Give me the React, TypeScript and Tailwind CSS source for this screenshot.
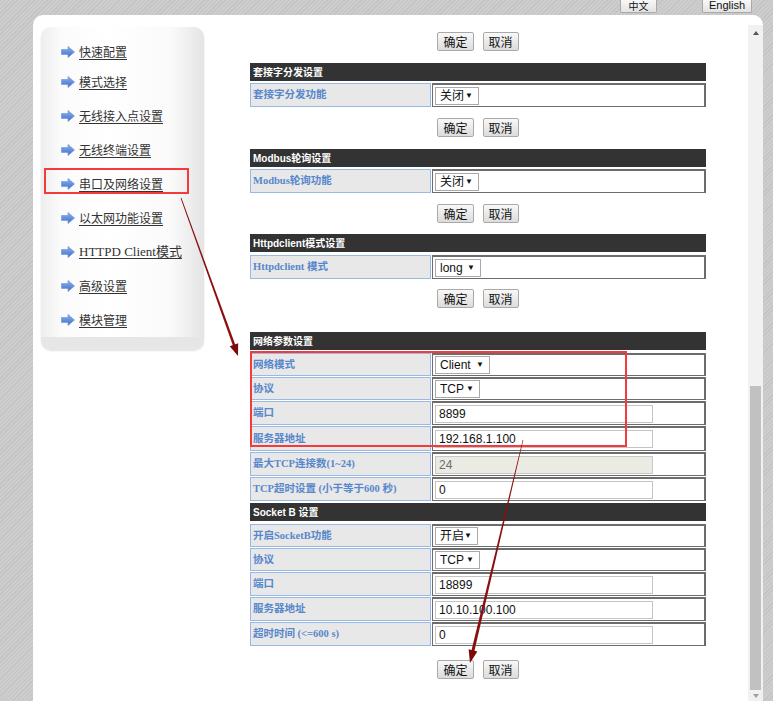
import React from "react";

const navItems = [
  { label: "快速配置", h: "h-[26px]" },
  { label: "模式选择", h: "h-[34px]" },
  { label: "无线接入点设置", h: "h-[34px]" },
  { label: "无线终端设置", h: "h-[34px]" },
  { label: "串口及网络设置", h: "h-[34px]" },
  { label: "以太网功能设置", h: "h-[34px]" },
  { label: "HTTPD Client模式", h: "h-[34px]", serif: true },
  { label: "高级设置", h: "h-[34px]" },
  { label: "模块管理", h: "h-[34px]" },
];

function BlueArrow() {
  return (
    <svg width="14" height="12" viewBox="0 0 14 12" className="shrink-0">
      <defs>
        <linearGradient id="ba" x1="0" y1="0" x2="0" y2="1">
          <stop offset="0" stopColor="#8fb4ee" />
          <stop offset="1" stopColor="#3d6cc8" />
        </linearGradient>
      </defs>
      <polygon
        points="0.5,3.5 7,3.5 7,0.5 13.5,6 7,11.5 7,8.5 0.5,8.5"
        fill="url(#ba)"
        stroke="#7a9fd8"
        strokeWidth="0.8"
      />
    </svg>
  );
}

function Btn({ children }: { children: React.ReactNode }) {
  return (
    <button className="flex h-[19px] items-center rounded-[2px] border border-[#a9a9a9] bg-[linear-gradient(#f8f8f8,#dcdcdc)] px-[5px] font-['Noto_Sans_CJK_SC',sans-serif] text-[12px] leading-none text-[#111]">
      {children}
    </button>
  );
}

function ButtonRow({ className }: { className: string }) {
  return (
    <div className={`flex justify-center gap-[9px] ${className}`}>
      <Btn>确定</Btn>
      <Btn>取消</Btn>
    </div>
  );
}

function Header({ title, className }: { title: string; className: string }) {
  return (
    <div
      className={`flex h-[18px] items-center bg-[#333] pl-[3px] font-['Liberation_Sans','Noto_Sans_CJK_SC',sans-serif] text-[10px] font-bold text-white ${className}`}
    >
      {title}
    </div>
  );
}

function Select({ value, w }: { value: string; w: string }) {
  return (
    <div
      className={`flex h-[18px] items-center justify-between border border-[#a9a9a9] bg-white pl-[4px] pr-[5px] font-['Liberation_Sans','Noto_Sans_CJK_SC',sans-serif] text-[12px] text-[#111] ${w}`}
    >
      <span>{value}</span>
      <span className="text-[8px]">▼</span>
    </div>
  );
}

function Input({ value, disabled }: { value: string; disabled?: boolean }) {
  return (
    <div
      className={
        disabled
          ? "flex h-[18px] w-[218px] items-center border border-[#c8c8c8] bg-[#ebebe4] pl-[3px] font-['Liberation_Sans',sans-serif] text-[12px] text-[#6d6d6d]"
          : "flex h-[18px] w-[218px] items-center border border-[#c4c4c4] bg-white pl-[3px] font-['Liberation_Sans',sans-serif] text-[12px] text-[#111]"
      }
    >
      {value}
    </div>
  );
}

function Row({
  label,
  h,
  children,
}: {
  label: string;
  h: string;
  children: React.ReactNode;
}) {
  return (
    <div className={`flex ${h}`}>
      <div className="flex w-[181px] items-center border border-[#97b9e4] bg-[#e8e8e8] pl-[2px] font-['Liberation_Serif','Noto_Sans_CJK_SC',serif] text-[10.5px] font-bold text-[#5787cc]">
        {label}
      </div>
      <div className="ml-[1px] flex flex-1 items-center border border-t-2 border-r-2 border-[#6c6c6c] pl-[2px]">
        {children}
      </div>
    </div>
  );
}

function taper(
  x1: number,
  y1: number,
  x2: number,
  y2: number,
  w1: number,
  w2: number,
  head: number,
  hw: number
) {
  const dx = x2 - x1;
  const dy = y2 - y1;
  const L = Math.hypot(dx, dy);
  const ux = dx / L;
  const uy = dy / L;
  const px = -uy;
  const py = ux;
  const bx = x2 - ux * (head - 1);
  const by = y2 - uy * (head - 1);
  const hx = x2 - ux * head;
  const hy = y2 - uy * head;
  const shaft = [
    [x1 + (px * w1) / 2, y1 + (py * w1) / 2],
    [bx + (px * w2) / 2, by + (py * w2) / 2],
    [bx - (px * w2) / 2, by - (py * w2) / 2],
    [x1 - (px * w1) / 2, y1 - (py * w1) / 2],
  ];
  const tip = [
    [x2, y2],
    [hx + px * hw, hy + py * hw],
    [hx - px * hw, hy - py * hw],
  ];
  const s = (a: number[][]) => a.map((p) => p.join(",")).join(" ");
  return { shaft: s(shaft), tip: s(tip) };
}

function Overlay() {
  const a1 = taper(181, 198, 238, 356, 0.8, 2.6, 12, 4.5);
  const a2 = taper(523, 440, 470, 663, 0.6, 3, 13, 4.5);
  return (
    <svg
      width="773"
      height="701"
      className="pointer-events-none absolute left-0 top-0"
    >
      <rect x="45" y="169" width="143" height="24" fill="none" stroke="#f43b3b" strokeWidth="2" />
      <rect x="251" y="352" width="375" height="94" fill="none" stroke="#f43b3b" strokeWidth="2" />
      <polygon points={a1.shaft} fill="#8a1010" />
      <polygon points={a1.tip} fill="#7a0a0a" />
      <polygon points={a2.shaft} fill="#8a1010" />
      <polygon points={a2.tip} fill="#7a0a0a" />
    </svg>
  );
}

export default function App() {
  return (
    <div className="relative h-[701px] w-[773px] overflow-hidden bg-[#cbcbcb] bg-[repeating-linear-gradient(135deg,#c3c3c3_0px,#c3c3c3_1px,#cdcdcd_1px,#cdcdcd_3px)]">
      <div className="flex h-[15px] items-start">
        <button className="ml-[620px] flex h-[13px] w-[37px] items-end justify-center rounded-b-[2px] border border-t-0 border-[#a9a9a9] bg-[linear-gradient(#f8f8f8,#e2e2e2)] font-['Noto_Sans_CJK_SC',sans-serif] text-[10px] leading-[13px] text-[#111]">
          中文
        </button>
        <button className="ml-[45px] flex h-[13px] w-[50px] items-end justify-center rounded-b-[2px] border border-t-0 border-[#a9a9a9] bg-[linear-gradient(#f8f8f8,#e2e2e2)] pb-[1px] font-['Liberation_Sans',sans-serif] text-[11px] leading-[11px] text-[#111]">
          English
        </button>
      </div>

      <div className="ml-[33px] flex h-[686px] w-[730px] overflow-hidden rounded-t-[10px] bg-white pl-[8px]">
        {/* sidebar */}
        <div className="mt-[12px] flex h-[323px] w-[163px] shrink-0 flex-col overflow-hidden rounded-[10px] bg-[linear-gradient(to_right,#ededed,#fbfbfb_12%,#ffffff_40%,#fafafa_80%,#e4e4e4)] shadow-[0_1px_2px_rgba(0,0,0,0.12)]">
          <div className="pt-[12px]">
            {navItems.map((it) => (
              <div key={it.label} className={`flex items-center pl-[20px] ${it.h}`}>
                <BlueArrow />
                <span
                  className={
                    it.serif
                      ? "ml-[4px] font-['Liberation_Serif','Noto_Sans_CJK_SC',serif] text-[13px] text-[#333] underline underline-offset-2"
                      : "ml-[4px] font-['Noto_Sans_CJK_SC',sans-serif] text-[12px] text-[#333] underline underline-offset-2"
                  }
                >
                  {it.label}
                </span>
              </div>
            ))}
          </div>
          <div className="mt-auto h-[14px] bg-[#e6e6e6]" />
        </div>

        {/* main */}
        <div className="ml-[46px] flex w-[456px] shrink-0 flex-col pt-[17px]">
          <ButtonRow className="" />

          <Header title="套接字分发设置" className="mt-[12px]" />
          <div className="mt-[2px]">
            <Row label="套接字分发功能" h="h-[24px]">
              <Select value="关闭" w="w-[44px]" />
            </Row>
          </div>
          <ButtonRow className="mt-[11px]" />

          <Header title="Modbus轮询设置" className="mt-[12px]" />
          <div className="mt-[2px]">
            <Row label="Modbus轮询功能" h="h-[24px]">
              <Select value="关闭" w="w-[44px]" />
            </Row>
          </div>
          <ButtonRow className="mt-[11px]" />

          <Header title="Httpdclient模式设置" className="mt-[11px]" />
          <div className="mt-[3px]">
            <Row label="Httpdclient 模式" h="h-[24px]">
              <Select value="long" w="w-[46px]" />
            </Row>
          </div>
          <ButtonRow className="mt-[10px]" />

          <Header title="网络参数设置" className="mt-[24px]" />
          <div className="mt-[3px] flex flex-col gap-[1px]">
            <Row label="网络模式" h="h-[23px]">
              <Select value="Client" w="w-[55px]" />
            </Row>
            <Row label="协议" h="h-[23px]">
              <Select value="TCP" w="w-[45px]" />
            </Row>
            <Row label="端口" h="h-[24px]">
              <Input value="8899" />
            </Row>
            <Row label="服务器地址" h="h-[25px]">
              <Input value="192.168.1.100" />
            </Row>
            <Row label="最大TCP连接数(1~24)" h="h-[24px]">
              <Input value="24" disabled />
            </Row>
            <Row label="TCP超时设置 (小于等于600 秒)" h="h-[24px]">
              <Input value="0" />
            </Row>
          </div>

          <Header title="Socket B 设置" className="mt-[2px]" />
          <div className="mt-[3px] flex flex-col gap-[1px]">
            <Row label="开启SocketB功能" h="h-[23px]">
              <Select value="开启" w="w-[43px]" />
            </Row>
            <Row label="协议" h="h-[23px]">
              <Select value="TCP" w="w-[45px]" />
            </Row>
            <Row label="端口" h="h-[24px]">
              <Input value="18899" />
            </Row>
            <Row label="服务器地址" h="h-[24px]">
              <Input value="10.10.100.100" />
            </Row>
            <Row label="超时时间 (<=600 s)" h="h-[24px]">
              <Input value="0" />
            </Row>
          </div>
          <ButtonRow className="mt-[14px]" />
        </div>

        {/* scrollbar */}
        <div className="ml-auto mt-[10px] flex w-[15px] shrink-0 flex-col items-center bg-[#f1f1f1]">
          <div className="flex h-[15px] items-center justify-center">
            <div className="h-0 w-0 border-x-[3.5px] border-b-[4px] border-x-transparent border-b-[#555]" />
          </div>
          <div className="flex-1" />
          <div className="h-[304px] w-[11px] bg-[#c1c1c1]" />
          <div className="flex h-[11px] items-center justify-center">
            <div className="h-0 w-0 border-x-[3.5px] border-t-[4px] border-x-transparent border-t-[#a0a0a0]" />
          </div>
        </div>
      </div>

      <Overlay />
    </div>
  );
}
